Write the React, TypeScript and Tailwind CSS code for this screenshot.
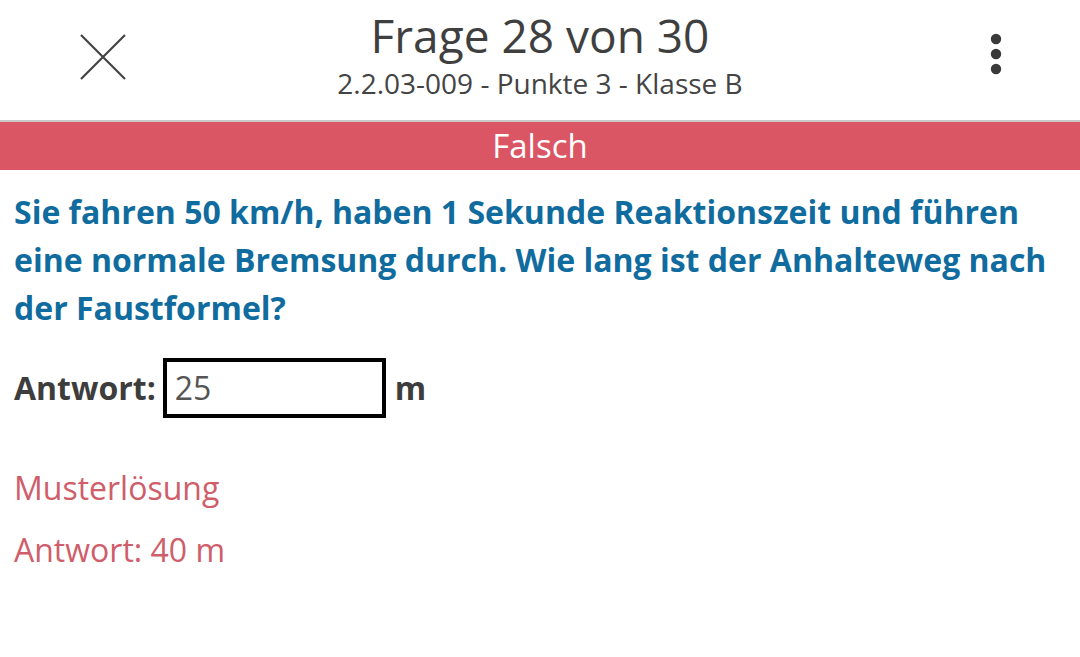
import React from 'react'

const font = { fontFamily: '"Open Sans", "Noto Sans", sans-serif' }

function CloseIcon() {
  return (
    <svg width="46" height="46" viewBox="0 0 46 46" fill="none" stroke="#444" strokeWidth={2.2}>
      <path d="M1 1L45 45M45 1L1 45" />
    </svg>
  )
}

function MoreIcon() {
  return (
    <svg width="12" height="44" viewBox="0 0 12 44" fill="#3a3a3a">
      <circle cx="6" cy="6" r="5.2" />
      <circle cx="6" cy="21" r="5.2" />
      <circle cx="6" cy="36" r="5.2" />
    </svg>
  )
}

export default function App() {
  return (
    <div className="w-[1080px] h-[657px] bg-white overflow-hidden" style={font}>
      {/* top bar */}
      <header className="h-[122px] grid grid-cols-[1fr_auto_1fr] items-center border-b-2 border-[#c9c9c9]">
        <div className="pl-[80px] pb-[6px]">
          <CloseIcon />
        </div>
        <div className="self-start pt-[12px] flex flex-col items-center">
          <h1 className="text-[46px] leading-[46px] text-[#3f3f3f]">Frage 28 von 30</h1>
          <p className="mt-[8px] text-[28px] leading-[34px] text-[#444]">2.2.03-009 - Punkte 3 - Klasse B</p>
        </div>
        <div className="flex justify-end pr-[78px] pb-[10px]">
          <MoreIcon />
        </div>
      </header>

      <div className="h-[48px] bg-[#db5664] flex items-center justify-center">
        <span className="text-[33px] leading-[40px] text-white">Falsch</span>
      </div>

      <main className="px-[14px] pt-[18px]">
        <p className="text-[32px] leading-[48px] font-bold text-[#106c9e]">
          Sie fahren 50 km/h, haben 1 Sekunde Reaktionszeit und führen eine normale Bremsung durch. Wie lang ist der Anhalteweg nach der Faustformel?
        </p>

        <div className="mt-[26px] flex items-center">
          <span className="text-[32px] font-bold text-[#3d3d3d]">Antwort:</span>
          <div className="ml-[7px] w-[223px] h-[60px] border-4 border-black flex items-center px-[8px]">
            <span className="text-[32px] text-[#555]">25</span>
          </div>
          <span className="ml-[9px] text-[32px] font-bold text-[#3d3d3d]">m</span>
        </div>

        <p className="mt-[46px] text-[32px] text-[#d05d6a]">Musterlösung</p>
        <p className="mt-[14px] text-[32px] text-[#d05d6a]">Antwort: 40 m</p>
      </main>
    </div>
  )
}
